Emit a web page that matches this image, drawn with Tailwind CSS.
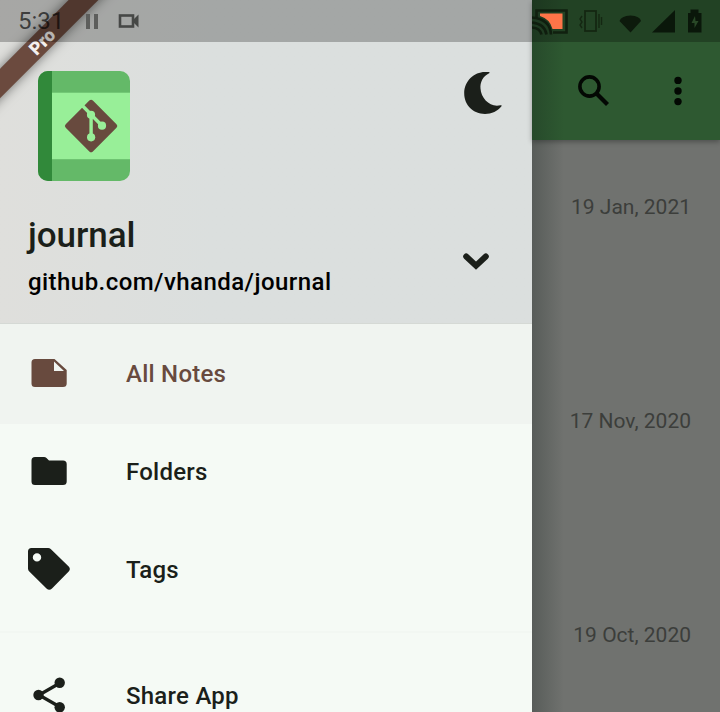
<!DOCTYPE html>
<html lang="en">
<head>
<meta charset="utf-8">
<title>journal</title>
<script src="https://cdn.jsdelivr.net/npm/@tailwindcss/browser@4"></script>
</head>
<body class="font-[Roboto,sans-serif]">
<div class="relative flex w-[720px] h-[712px] overflow-hidden bg-[#70726f]">
  <!-- Navigation drawer -->
  <aside class="relative w-[532px] shrink-0 flex flex-col bg-[#f5faf5] text-[#1b1f1a] overflow-hidden">
    <header class="h-[324px] shrink-0 bg-linear-to-r from-[#dfdfdc] to-[#dbdfde] to-40% border-b border-[#d5d9d5] pt-[71px] flex flex-col">
      <div class="flex justify-between pl-[38px] pr-[29px]">
        <svg class="w-[92px] h-[110px]" viewBox="38 71 92 110">
          <clipPath id="book"><rect x="38" y="71" width="92" height="110" rx="10"/></clipPath>
          <g clip-path="url(#book)">
            <rect x="38" y="71" width="92" height="110" fill="#64b968"/>
            <rect x="52" y="92.7" width="78" height="66.5" fill="#98ef98"/>
            <rect x="38" y="71" width="14" height="110" fill="#31893a"/>
          </g>
          <rect x="71.9" y="106.8" width="38.400" height="38.400" rx="2.5" transform="rotate(45 91.1 126)" fill="#684a3e"/>
          <g stroke="#98ef98" stroke-width="3.4" fill="none"><path d="M81.500 104.800L102 125.700M91.100 114.500V137.300"/></g>
          <g fill="#98ef98"><circle cx="91" cy="114.800" r="4.100"/><circle cx="102" cy="125.700" r="4.100"/><circle cx="91.100" cy="137.300" r="4.100"/></g>
        </svg>
        <svg class="w-10 h-[44px]" viewBox="463 71 40 44" fill="#1b1f1a"><path d="M489.500 73C482.500 76.500 480 82.500 480.500 88.500C481 98.500 490.500 108 500.500 105.200C501.500 105 502 105.500 501.300 106.500C498 111 491.500 114 485 114C473 114 464.200 105 464.200 93.300C464.200 81 474 72 485 72C486.600 72 488.500 72 489.500 72.200Z"/></svg>
      </div>
      <div class="flex justify-between pl-7 pr-[42px] pt-[34px]">
        <div>
          <h1 class="text-[35px] leading-[41px] font-medium -tracking-[0.05px]">journal</h1>
          <p class="mt-[12px] text-[24px] leading-7 font-medium text-black tracking-[0.45px]">github.com/vhanda/journal</p>
        </div>
        <svg class="mt-[36px] w-7 h-5" viewBox="0 0 28 20"><path d="M4.200 5.500L14 14.600L23.800 5.500" fill="none" stroke="#1b1f1a" stroke-width="6" stroke-linecap="round"/></svg>
      </div>
    </header>
    <nav class="text-[24px] leading-7 font-medium tracking-[0.25px]">
      <a class="flex items-center h-[100px] bg-[#f0f4f0] pl-7 text-[#684a3e]">
        <svg class="w-[42px] h-[42px] mr-14 -mt-0.5" viewBox="0 0 42 42" fill="currentColor"><path fill-rule="evenodd" d="M7 7H26.500L38.700 18V31.500Q38.700 35 35 35H7Q3.500 35 3.500 31.500V10.500Q3.500 7 7 7ZM26 9.500V19H36Z"/></svg>
        All Notes
      </a>
      <a class="flex items-center h-[96px] pl-7">
        <svg class="w-[42px] h-[42px] mr-14 -mt-0.5" viewBox="0 0 42 42" fill="currentColor"><path d="M7 7H16Q17.500 7 18.500 8L21 10.500H35Q38.700 10.500 38.700 14V31.500Q38.700 35 35 35H7Q3.500 35 3.500 31.500V10.500Q3.500 7 7 7Z"/></svg>
        Folders
      </a>
      <a class="flex items-center h-[100px] pl-7">
        <svg class="w-[42px] h-[42px] mr-14 -mt-0.5" viewBox="0 0 42 42" fill="currentColor"><path fill-rule="evenodd" d="M0 3.500Q0 0 3.500 0H20.200Q21.600 0 22.700 1.100L40.700 18.500Q43 21 40.700 23.500L24 40.500Q21.300 43 18.500 40.500L1.300 23.500Q0 22.300 0 20.500ZM9 5.200A4.200 4.200 0 1 0 9 13.600A4.200 4.200 0 1 0 9 5.200Z"/></svg>
        Tags
      </a>
      <div class="h-[26px] pt-[11px]"><div class="h-[2px] bg-[#f2f7f2]"></div></div>
      <a class="flex items-center h-[100px] pl-7">
        <svg class="w-[42px] h-[42px] mr-14 -mt-0.5" viewBox="0 0 42 42" fill="currentColor"><path d="M32 9L11 21L32 33" fill="none" stroke="currentColor" stroke-width="3.300"/><circle cx="31.700" cy="8.800" r="5.200"/><circle cx="10.500" cy="21" r="5.200"/><circle cx="31.700" cy="33.200" r="5.200"/></svg>
        Share App
      </a>
    </nav>
    <!-- Corner ribbon -->
    <div class="absolute left-[-58px] top-[31px] w-[200px] h-[21px] -rotate-45 bg-[#6b4a3e] shadow-[0_0_12px_rgba(0,0,0,0.5)] text-[#f4f0ee] text-[18px] leading-[21px] font-black text-center">Pro</div>
  </aside>

  <!-- Note list behind the scrim -->
  <main class="relative flex-1 flex flex-col bg-[#70726f]">
    <div class="h-[140px] shrink-0 bg-[#2e5931] shadow-[0_2px_5px_rgba(0,0,0,0.3)] flex items-start pt-[73px] pl-[44px]">
      <svg class="w-9 h-9" viewBox="576 73 36 36" fill="none" stroke="#030803"><circle cx="589.500" cy="86.500" r="9.600" stroke-width="3.600"/><path d="M596.500 93.500L607.500 104.500" stroke-width="4.200"/></svg>
      <svg class="w-3 h-9 ml-[60px]" viewBox="672 73 12 36" fill="#030803"><circle cx="678" cy="80.400" r="3.700"/><circle cx="678" cy="91" r="3.700"/><circle cx="678" cy="101.600" r="3.700"/></svg>
    </div>
    <div class="pr-[29px] pt-[55px] flex flex-col gap-[190px] items-end text-[21px] leading-6 text-[#3c3e3b]">
      <time>19 Jan, 2021</time>
      <time>17 Nov, 2020</time>
      <time>19 Oct, 2020</time>
    </div>
    <div class="absolute inset-y-0 left-0 w-8 bg-linear-to-r from-[#101c18]/25 to-transparent"></div>
  </main>

  <!-- System status bar -->
  <div class="absolute inset-x-0 top-0 h-[42px] bg-black/25 flex items-start">
    <span class="w-[84px] pl-[18px] pt-[7px] text-[24px] leading-7 text-black/65 whitespace-nowrap">5:31</span>
    <svg class="w-4 h-[42px]" viewBox="84 0 16 42" fill="#5d5e5c"><path d="M86 14h4v15h-4zM94 14h4v15h-4z"/></svg>
    <svg class="w-6 h-[42px] ml-[17px]" viewBox="117 0 24 42"><rect x="120" y="15.500" width="13" height="11" fill="none" stroke="#464846" stroke-width="2.600"/><path d="M133 20L138.500 14.500V27.500L133 22Z" fill="#464846"/></svg>
    <svg class="absolute left-[532px] top-0 w-[188px] h-[42px]" viewBox="532 0 188 42">
      <path d="M536.500 18V10.500H566.500V32.500H553" fill="none" stroke="#11200f" stroke-width="2.600"/>
      <path d="M540 13.500H562.500V29H552.500Q550 19 540 16Z" fill="#ff7448"/>
      <path d="M532 17.500Q550 19 551 34.500M532 22.500Q545 24 546.500 34.500M532 27.500Q540 28 541.500 34.500" fill="none" stroke="#0f1d0e" stroke-width="2.600"/>
      <g fill="none" stroke="#142712" stroke-width="1.800"><rect x="585" y="11" width="11" height="20"/><path d="M582 16l-2 3 2 3-2 3 2 3M599 14v14M601.500 17v8" stroke-width="1.400"/></g>
      <path d="M619.500 21Q621 16 630.500 15.500Q640 16 641 21L630.500 32.500Z" fill="#0d1a0c"/>
      <path d="M652 32.500L675 10V32.500Z" fill="#0a170a"/>
      <path d="M688 13H690.500V9.500H698.500V13H701.500V32.500H688V13Z" fill="#0a170a"/>
      <path d="M695 16L691.500 23H694.500V28L698.500 21H695.500Z" fill="#294827"/>
    </svg>
  </div>
</div>
</body>
</html>
